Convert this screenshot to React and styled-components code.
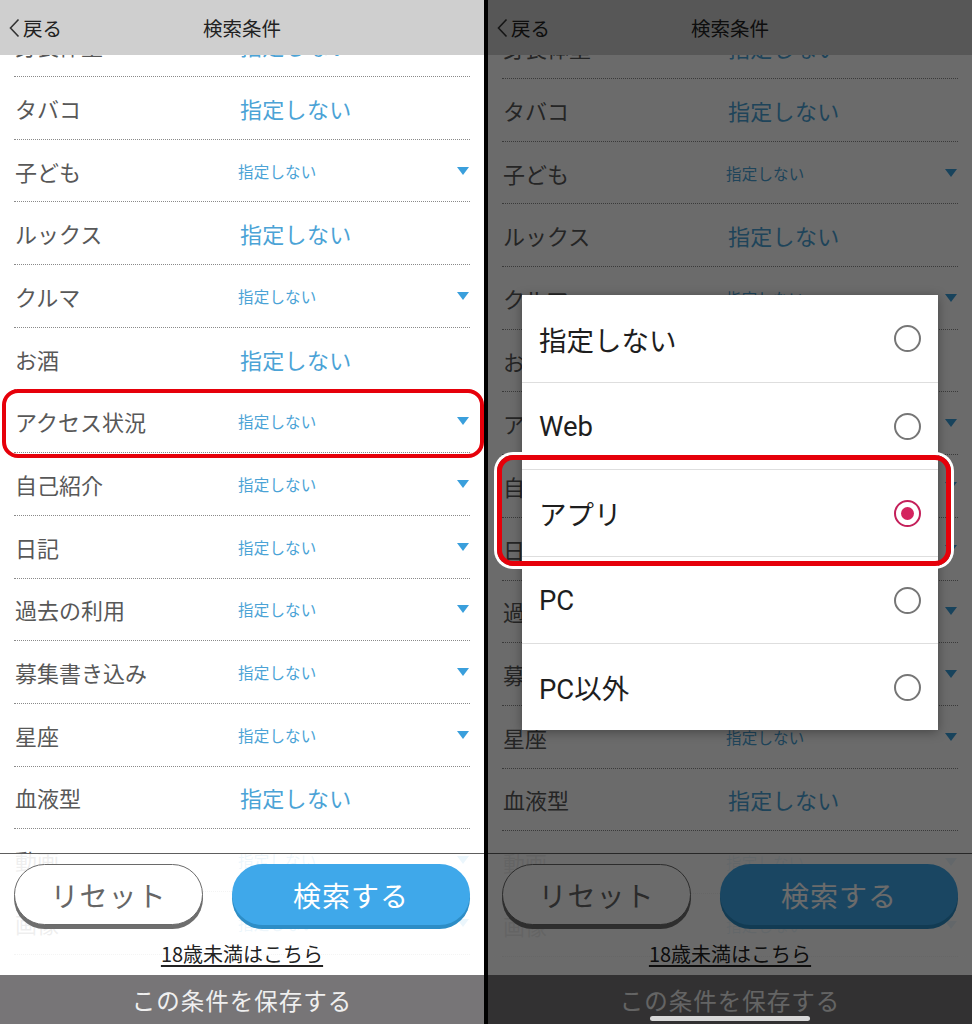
import React from 'react'
import styled, { createGlobalStyle } from 'styled-components'

const GlobalStyle = createGlobalStyle`
  html, body {
    margin: 0;
    padding: 0;
    background: #000;
  }
  * { box-sizing: border-box; }
`

const JP = `"Noto Sans CJK JP", "Noto Sans", sans-serif`

const Screen = styled.div`
  display: flex;
  gap: 4px;
  width: 972px;
  height: 1024px;
  background: #000;
  font-family: ${JP};
`

const Panel = styled.div`
  position: relative;
  width: 484px;
  height: 1024px;
  background: #fff;
  overflow: hidden;
`

const Header = styled.div`
  position: relative;
  z-index: 2;
  height: 55px;
  background: #cfcfcf;
  display: flex;
  align-items: center;
  justify-content: center;
  color: #222;
  font-size: 19.5px;
`

const Back = styled.div`
  position: absolute;
  left: 9px;
  top: 0;
  bottom: 0;
  display: flex;
  align-items: center;
  gap: 3px;
  svg { display: block; }
`

const List = styled.div`
  margin-top: ${p => p.$shift}px;
`

const Row = styled.div`
  display: flex;
  align-items: center;
  height: 62.7px;
  margin: 0 14px;
  border-bottom: 1px dotted #8a8a8a;
`

const Label = styled.div`
  width: 224px;
  padding-left: 1px;
  font-size: 22px;
  color: #585858;
  white-space: nowrap;
`

const Value = styled.div`
  flex: 1;
  color: #4ba3d6;
  font-size: ${p => (p.$big ? '22px' : '15.5px')};
  margin-left: ${p => (p.$big ? '2px' : '0')};
  letter-spacing: ${p => (p.$big ? '0.3px' : '0.2px')};
`

const Caret = styled.span`
  width: 0;
  height: 0;
  margin-right: 1px;
  border-left: 6px solid transparent;
  border-right: 6px solid transparent;
  border-top: 8px solid #3a9fdc;
`

const Footer = styled.div`
  position: absolute;
  z-index: 3;
  left: 0;
  right: 0;
  bottom: 0;
  height: 171px;
  border-top: 1px solid #5e5e5e;
  display: flex;
  flex-direction: column;
`

const FooterBody = styled.div`
  flex: 1;
  background: rgba(255, 255, 255, 0.9);
  display: flex;
  flex-direction: column;
  align-items: center;
  padding-top: 10px;
`

const ButtonRow = styled.div`
  display: flex;
  gap: 29px;
  width: 100%;
  padding: 0 14px;
`

const Pill = styled.div`
  height: 61px;
  border-radius: 31px;
  display: flex;
  align-items: center;
  justify-content: center;
  font-size: 28px;
  letter-spacing: 1px;
`

const ResetButton = styled(Pill)`
  width: 189px;
  background: #fff;
  border: 1.5px solid #6a6a6a;
  color: #666;
  box-shadow: 0 4px 0 #6e6e6e;
`

const SearchButton = styled(Pill)`
  flex: 1;
  background: #3fa8ea;
  color: #fff;
  box-shadow: 0 4px 0 #2d8dc6;
`

const MinorLink = styled.div`
  margin-top: 14px;
  font-size: 20px;
  color: #222;
  text-decoration: underline;
  text-underline-offset: 3px;
`

const SaveBar = styled.div`
  height: 49px;
  background: #777577;
  color: #efefef;
  font-size: 23.5px;
  letter-spacing: 1px;
  display: flex;
  align-items: center;
  justify-content: center;
`

const Highlight = styled.div`
  position: absolute;
  z-index: 6;
  left: ${p => p.$left}px;
  top: ${p => p.$top}px;
  width: ${p => p.$width}px;
  height: ${p => p.$height}px;
  border: ${p => p.$stroke}px solid #e6000a;
  border-radius: 16px;
  box-shadow: 0 0 0 3px #fff;
`

const Dim = styled.div`
  position: absolute;
  z-index: 4;
  inset: 0;
  background: rgba(0, 0, 0, 0.58);
`

const Dialog = styled.div`
  position: absolute;
  z-index: 5;
  left: 34px;
  top: 295px;
  width: 416px;
  background: #fff;
  box-shadow: 0 2px 10px rgba(0, 0, 0, 0.35);
`

const Option = styled.div`
  height: 87px;
  display: flex;
  align-items: center;
  justify-content: space-between;
  padding: 0 17px 0 17px;
  font-family: Roboto, ${JP};
  font-size: 27.5px;
  color: #1e1e1e;
  & + & { border-top: 1px solid #dedede; }
`

const Radio = styled.span`
  position: relative;
  width: 27px;
  height: 27px;
  border-radius: 50%;
  border: 2.5px solid ${p => (p.$on ? '#c4205a' : '#767676')};
  &::after {
    content: '';
    display: ${p => (p.$on ? 'block' : 'none')};
    position: absolute;
    left: 50%;
    top: 50%;
    width: 13px;
    height: 13px;
    margin: -6.5px 0 0 -6.5px;
    border-radius: 50%;
    background: #d4245f;
  }
`

const HomeBar = styled.div`
  position: absolute;
  z-index: 5;
  left: 162px;
  bottom: 3px;
  width: 160px;
  height: 5px;
  border-radius: 3px;
  background: #d8d8d8;
`

const rows = [
  { label: '身長体重', big: true },
  { label: 'タバコ', big: true },
  { label: '子ども' },
  { label: 'ルックス', big: true },
  { label: 'クルマ' },
  { label: 'お酒', big: true },
  { label: 'アクセス状況' },
  { label: '自己紹介' },
  { label: '日記' },
  { label: '過去の利用' },
  { label: '募集書き込み' },
  { label: '星座' },
  { label: '血液型', big: true },
  { label: '動画' },
  { label: '画像' },
]

const options = ['指定しない', 'Web', 'アプリ', 'PC', 'PC以外']

function Chevron() {
  return (
    <svg width="11" height="20" viewBox="0 0 11 20">
      <polyline points="9.5,1.5 1.5,10 9.5,18.5" fill="none" stroke="#333" strokeWidth="1.6" />
    </svg>
  )
}

function SearchPage({ shift, children }) {
  return (
    <Panel>
      <Header>
        <Back>
          <Chevron />
          戻る
        </Back>
        検索条件
      </Header>
      <List $shift={shift}>
        {rows.map(r => (
          <Row key={r.label}>
            <Label>{r.label}</Label>
            <Value $big={r.big}>指定しない</Value>
            {!r.big && <Caret />}
          </Row>
        ))}
      </List>
      <Footer>
        <FooterBody>
          <ButtonRow>
            <ResetButton>リセット</ResetButton>
            <SearchButton>検索する</SearchButton>
          </ButtonRow>
          <MinorLink>18歳未満はこちら</MinorLink>
        </FooterBody>
        <SaveBar>この条件を保存する</SaveBar>
      </Footer>
      {children}
    </Panel>
  )
}

export default function App() {
  return (
    <>
      <GlobalStyle />
      <Screen>
        <SearchPage shift={-40.7}>
          <Highlight $left={2} $top={389} $width={482} $height={69} $stroke={4} />
        </SearchPage>
        <SearchPage shift={-38.7}>
          <Dim />
          <Dialog>
            {options.map(o => (
              <Option key={o}>
                {o}
                <Radio $on={o === 'アプリ'} />
              </Option>
            ))}
          </Dialog>
          <Highlight $left={9} $top={455} $width={454} $height={111} $stroke={5} />
          <HomeBar />
        </SearchPage>
      </Screen>
    </>
  )
}
